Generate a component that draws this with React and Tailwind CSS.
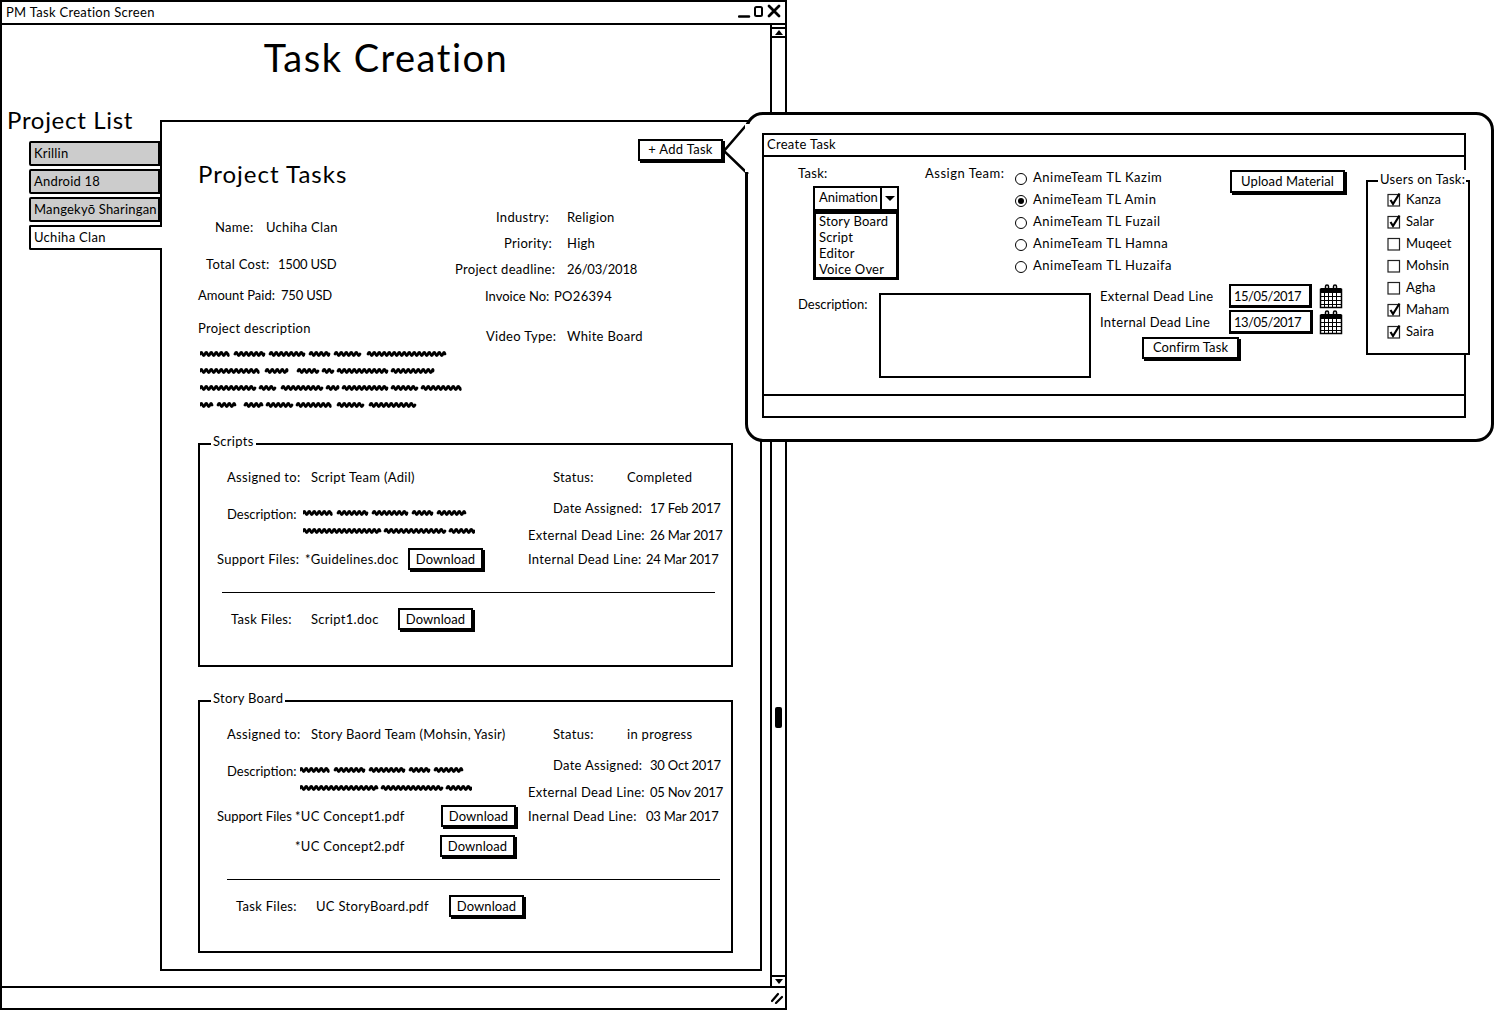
import React from 'react';

const btnClass = 'flex items-center justify-center border-2 border-black bg-white shadow-[2px_2px_0_#000] shrink-0 tracking-[0.1px]';
const dateText = 'tracking-[-0.2px]';

const Button = ({ className, children }) => (
    <div className={`${btnClass} ${className}`}>{children}</div>
);

// redacted text, words are [start, end] in px from the left of the line
const Squiggle = ({ words, width, className }) => {
    const paths = words.map(([a, b]) => {
        let d = `M${a} 9`;
        let up = true;
        for (let x = a; x < b; x += 2.5) {
            d += ` Q${x + 1.25} ${up ? 6 : 12} ${Math.min(x + 2.5, b)} 9`;
            up = !up;
        }
        return d;
    });
    return (
        <svg width={width} height="18" className={className}>
            {paths.map((d, i) => (
                <path key={i} d={d} fill="none" stroke="#000" strokeWidth="2.8" strokeLinecap="round" />
            ))}
        </svg>
    );
};

const Calendar = () => (
    <svg width="24" height="25" viewBox="0 0 24 25" className="shrink-0">
        <rect x="1.5" y="5.5" width="21" height="18" fill="#fff" stroke="#000" strokeWidth="1.5" />
        <rect x="1.5" y="4" width="21" height="5" fill="#000" />
        <path d="M1.5 12.5H22.5M1.5 16.5H22.5M1.5 20.5H22.5M5.5 9V24M9.5 9V24M13.5 9V24M17.5 9V24" stroke="#000" strokeWidth="1" />
        <path d="M6.5 6V2.5Q6.5 1 8 1T9.5 2.5V6M14.5 6V2.5Q14.5 1 16 1T17.5 2.5V6" fill="none" stroke="#000" strokeWidth="1.5" />
    </svg>
);

const Checkbox = ({ label, checked }) => (
    <div className="flex items-center h-[22px] gap-[5px]">
        <svg width="14" height="16" viewBox="0 0 14 16" className="shrink-0 -mt-[2px]">
            <rect x="1" y="3.5" width="11.5" height="11.5" fill="#fff" stroke="#222" strokeWidth="1.2" />
            {checked && <path d="M3.5 9L6 13L12.5 2.5" fill="none" stroke="#000" strokeWidth="2.2" />}
        </svg>
        <span className="tracking-[0.1px]">{label}</span>
    </div>
);

const Radio = ({ label, checked }) => (
    <div className="flex items-center h-[22px] gap-[6px]">
        <div className="flex items-center justify-center w-[12px] h-[12px] mt-[1px] rounded-full border border-black shrink-0">
            {checked && <div className="w-[6px] h-[6px] rounded-full bg-black" />}
        </div>
        <span className="tracking-[0.5px]">{label}</span>
    </div>
);

const Field = ({ label, value, labelClass = '', valueClass = '', className = '', children }) => (
    <div className={`flex items-center h-[18px] leading-[18px] whitespace-nowrap ${className}`}>
        <span className={`shrink-0 ${labelClass}`}>{label}</span>
        {value !== undefined && <span className={`shrink-0 ${valueClass}`}>{value}</span>}
        {children}
    </div>
);

const GroupBox = ({ title, className, children }) => (
    <div className={`relative border-2 border-black ml-[36px] w-[535px] ${className}`}>
        <div className="absolute -top-[13px] left-[11px] h-[18px] leading-[18px] px-[2px] bg-white">{title}</div>
        {children}
    </div>
);

const line1 = [[0, 28], [35, 64], [70, 104], [110, 129], [135, 160], [168, 245]];
const line2 = [[0, 58], [66, 87], [98, 118], [123, 133], [138, 187], [192, 233]];
const line3 = [[0, 55], [60, 75], [82, 122], [127, 138], [143, 187], [192, 217], [222, 260]];
const line4 = [[0, 12], [18, 35], [45, 62], [67, 92], [97, 130], [138, 163], [170, 215]];
const descA = [[0, 28], [35, 64], [70, 104], [110, 129], [135, 162]];
const descB = [[0, 77], [82, 142], [147, 171]];

const ProjectPanel = () => (
    <div className="w-[602px] h-[851px] mt-[29px] border-2 border-black pt-[17px] shrink-0 bg-white">
        <div className="flex justify-end pr-[37px]">
            <Button className="w-[85px] h-[22px] tracking-[0.3px]">+ Add Task</Button>
        </div>
        <h2 className="ml-[36px] h-[28px] leading-[26px] text-[24px] tracking-[1px]">Project Tasks</h2>

        <div className="flex ml-[36px]">
            <div className="w-[257px] shrink-0">
                <Field className="mt-[29px]" label="Name:" value="Uchiha Clan" labelClass="ml-[17px] w-[51px]" />
                <Field className="mt-[19px]" label="Total Cost:" value="1500 USD" labelClass="ml-[8px] w-[72px]" valueClass={dateText} />
                <Field className="mt-[13px]" label="Amount Paid:" value="750 USD" labelClass="w-[83px] tracking-[0px]" valueClass={dateText} />
                <Field className="mt-[15px]" label="Project description" />
                <div className="flex flex-col mt-[8px]">
                    <Squiggle words={line1} width="262" className="ml-[2px]" />
                    <Squiggle words={line2} width="262" className="-mt-[1px] ml-[2px]" />
                    <Squiggle words={line3} width="262" className="-mt-[1px] ml-[2px]" />
                    <Squiggle words={line4} width="262" className="-mt-[1px] ml-[2px]" />
                </div>
            </div>
            <div>
                <Field className="mt-[19px]" label="Industry:" value="Religion" labelClass="ml-[41px] w-[71px]" />
                <Field className="mt-[8px]" label="Priority:" value="High" labelClass="ml-[49px] w-[63px]" />
                <Field className="mt-[8px]" label="Project deadline:" value="26/03/2018" labelClass="w-[112px]" valueClass={dateText} />
                <Field className="mt-[9px]" label="Invoice No:" value="PO26394" labelClass="ml-[30px] w-[69px] tracking-[0px]" />
                <Field className="mt-[22px]" label="Video Type:" value="White Board" labelClass="ml-[31px] w-[81px]" />
            </div>
        </div>

        <GroupBox title="Scripts" className="mt-[29px] h-[224px]">
            <div className="flex pt-[23px]">
                <div className="w-[328px] shrink-0">
                    <Field label="Assigned to:" value="Script Team (Adil)" labelClass="ml-[27px] w-[84px]" />
                    <div className="flex mt-[19px]">
                        <Field label="Description:" labelClass="ml-[27px] w-[76px] tracking-[0px]" />
                        <div className="flex flex-col -mt-[1px]">
                            <Squiggle words={descA} width="172" />
                            <Squiggle words={descB} width="172" />
                        </div>
                    </div>
                    <Field className="mt-[10px]" label="Support Files:" value={<span className="inline-block w-[103px]">*Guidelines.doc</span>} labelClass="ml-[17px] w-[88px]">
                        <Button className="w-[75px] h-[22px]">Download</Button>
                    </Field>
                </div>
                <div>
                    <Field label="Status:" value="Completed" labelClass="ml-[25px] w-[74px]" />
                    <Field className="mt-[13px]" label="Date Assigned:" value="17 Feb 2017" labelClass="ml-[25px] w-[97px]" valueClass={dateText} />
                    <Field className="mt-[9px]" label="External Dead Line:" value="26 Mar 2017" labelClass="w-[122px]" valueClass={dateText} />
                    <Field className="mt-[6px]" label="Internal Dead Line:" value="24 Mar 2017" labelClass="w-[118px]" valueClass={dateText} />
                </div>
            </div>
            <div className="h-[1px] bg-black mt-[24px] ml-[22px] w-[493px]" />
            <Field className="mt-[17px]" label="Task Files:" value={<span className="inline-block w-[87px]">Script1.doc</span>} labelClass="ml-[31px] w-[80px]">
                <Button className="w-[75px] h-[22px]">Download</Button>
            </Field>
        </GroupBox>

        <GroupBox title="Story Board" className="mt-[33px] h-[253px]">
            <div className="flex pt-[23px]">
                <div className="w-[328px] shrink-0">
                    <Field label="Assigned to:" value="Story Baord Team (Mohsin, Yasir)" labelClass="ml-[27px] w-[84px]" />
                    <div className="flex mt-[19px]">
                        <Field label="Description:" labelClass="ml-[27px] w-[73px] tracking-[0px]" />
                        <div className="flex flex-col -mt-[1px]">
                            <Squiggle words={descA} width="172" />
                            <Squiggle words={descB} width="172" />
                        </div>
                    </div>
                    <Field className="mt-[10px]" label="Support Files" value={<span className="inline-block w-[146px]">*UC Concept1.pdf</span>} labelClass="ml-[17px] w-[78px] tracking-[0px]">
                        <Button className="w-[75px] h-[22px]">Download</Button>
                    </Field>
                    <Field className="mt-[12px]" label="" value={<span className="inline-block w-[145px]">*UC Concept2.pdf</span>} labelClass="ml-[95px]">
                        <Button className="w-[75px] h-[22px]">Download</Button>
                    </Field>
                </div>
                <div>
                    <Field label="Status:" value="in progress" labelClass="ml-[25px] w-[74px]" />
                    <Field className="mt-[13px]" label="Date Assigned:" value="30 Oct 2017" labelClass="ml-[25px] w-[97px]" valueClass={dateText} />
                    <Field className="mt-[9px]" label="External Dead Line:" value="05 Nov 2017" labelClass="w-[122px]" valueClass={dateText} />
                    <Field className="mt-[6px]" label="Inernal Dead Line:" value="03 Mar 2017" labelClass="w-[118px]" valueClass={dateText} />
                </div>
            </div>
            <div className="h-[1px] bg-black mt-[24px] ml-[27px] w-[493px]" />
            <Field className="mt-[17px]" label="Task Files:" value={<span className="inline-block w-[133px]">UC StoryBoard.pdf</span>} labelClass="ml-[36px] w-[80px]">
                <Button className="w-[75px] h-[22px]">Download</Button>
            </Field>
        </GroupBox>
    </div>
);

const tabs = ['Krillin', 'Android 18', 'Mangekyō Sharingan'];

const TaskWindow = () => (
    <div className="flex flex-col w-[787px] h-[1010px] border-2 border-black bg-white">
        <div className="flex items-center justify-between h-[23px] border-b-2 border-black pl-[4px] pr-[3px] shrink-0">
            <span>PM Task Creation Screen</span>
            <svg width="44" height="14" viewBox="0 0 44 14" className="-mt-[3px]">
                <path d="M1 12.5H11" stroke="#000" strokeWidth="2.5" strokeLinecap="round" />
                <rect x="17" y="3" width="7" height="9" rx="1.5" fill="none" stroke="#000" strokeWidth="2" />
                <path d="M31 2L41 12M41 2L31 12" stroke="#000" strokeWidth="2.8" strokeLinecap="round" />
            </svg>
        </div>
        <div className="flex flex-1 min-h-0">
            <div className="flex-1 min-w-0">
                <h1 className="h-[66px] leading-[64px] text-center text-[38px] tracking-[1.5px]">Task Creation</h1>
                <div className="flex">
                    <div className="w-[158px] shrink-0">
                        <div className="mt-[14px] ml-[5px] h-[30px] leading-[30px] text-[24px] tracking-[0.7px] whitespace-nowrap">Project List</div>
                        <div className="flex flex-col gap-[3px] mt-[6px] ml-[27px]">
                            {tabs.map((t) => (
                                <div key={t} className="w-[131px] h-[25px] leading-[21px] pl-[3px] border-2 border-black bg-[#cccccc] rounded-l-[2px] whitespace-nowrap tracking-[0.2px]">{t}</div>
                            ))}
                            <div className="relative z-10 w-[133px] h-[25px] leading-[21px] pl-[3px] border-2 border-r-0 border-black bg-white rounded-l-[2px]">Uchiha Clan</div>
                        </div>
                    </div>
                    <ProjectPanel />
                </div>
            </div>
            <div className="flex flex-col w-[15px] border-l-2 border-black shrink-0">
                <div className="flex items-center justify-center h-[11px] mt-[2px] border-y-2 border-black">
                    <div className="w-0 h-0 border-x-[4px] border-x-transparent border-b-[5px] border-b-black" />
                </div>
                <div className="w-[7px] h-[21px] mt-[669px] mx-auto bg-black rounded-[2px]" />
                <div className="flex items-center justify-center h-[11px] mt-auto border-t-2 border-black">
                    <div className="w-0 h-0 border-x-[4px] border-x-transparent border-t-[5px] border-t-black" />
                </div>
            </div>
        </div>
        <div className="flex items-center justify-end h-[22px] border-t-2 border-black pr-[2px] shrink-0">
            <svg width="12" height="12" viewBox="0 0 12 12">
                <path d="M1 9L7 2M5 11L11 5" stroke="#000" strokeWidth="2.2" strokeLinecap="round" />
            </svg>
        </div>
    </div>
);

const CreateTaskPopup = () => (
    <div className="absolute left-[745px] top-[112px] z-20 w-[749px] h-[330px] border-[3px] border-black rounded-[18px] bg-white">
        <svg width="30" height="60" viewBox="0 0 30 60" className="absolute -left-[25px] top-[3px] overflow-visible">
            <path d="M26 4L1 33L25 56" fill="#fff" stroke="#000" strokeWidth="2.5" />
            <rect x="22" y="6" width="6" height="48" fill="#fff" />
        </svg>
        <div className="flex flex-col w-[704px] h-[285px] mt-[18px] ml-[14px] border-2 border-black">
            <div className="h-[22px] leading-[18px] pl-[3px] border-b-2 border-black shrink-0">Create Task</div>
            <div className="flex flex-1 pl-[34px] min-h-0">
                <div className="w-[568px] shrink-0">
                    <div className="flex pt-[7px]">
                        <div className="w-[127px] shrink-0">
                            <Field label="Task:" />
                            <div className="flex w-[86px] h-[25px] mt-[4px] ml-[15px] border-2 border-black">
                                <div className="w-[67px] leading-[18px] pl-[4px] border-r-2 border-black tracking-[0px]">Animation</div>
                                <div className="flex flex-1 items-center justify-center">
                                    <div className="w-0 h-0 border-x-[5px] border-x-transparent border-t-[5px] border-t-black" />
                                </div>
                            </div>
                            <div className="w-[86px] h-[69px] ml-[15px] pl-[3px] border-[3px] border-black tracking-[0.2px]">
                                <div className="-mt-[1px] leading-[16px]">
                                    <div>Story Board</div>
                                    <div>Script</div>
                                    <div>Editor</div>
                                    <div>Voice Over</div>
                                </div>
                            </div>
                        </div>
                        <div className="w-[90px] shrink-0">
                            <Field label="Assign Team:" labelClass="tracking-[0.5px]" />
                        </div>
                        <div className="w-[215px] shrink-0 mt-[3px]">
                            <Radio label="AnimeTeam TL Kazim" />
                            <Radio label="AnimeTeam TL Amin" checked />
                            <Radio label="AnimeTeam TL Fuzail" />
                            <Radio label="AnimeTeam TL Hamna" />
                            <Radio label="AnimeTeam TL Huzaifa" />
                        </div>
                        <Button className="w-[115px] h-[23px] mt-[6px]">Upload Material</Button>
                    </div>
                    <div className="flex mt-[4px]">
                        <Field className="w-[81px] mt-[11px]" label="Description:" labelClass="tracking-[0px]" />
                        <div className="w-[212px] h-[85px] mt-[9px] border-2 border-black shrink-0" />
                        <div className="ml-[9px]">
                            <div className="flex">
                                <Field className="w-[129px] h-[24px]" label="External Dead Line" />
                                <div className="w-[83px] h-[24px] leading-[20px] pl-[3px] border-2 border-r-[3px] border-b-[3px] border-black shrink-0 tracking-[-0.5px]">15/05/2017</div>
                                <div className="ml-[7px]"><Calendar /></div>
                            </div>
                            <div className="flex mt-[1px]">
                                <Field className="w-[129px] h-[24px]" label="Internal Dead Line" />
                                <div className="w-[84px] h-[24px] leading-[20px] pl-[3px] border-2 border-r-[3px] border-b-[3px] border-black shrink-0 tracking-[-0.5px]">13/05/2017</div>
                                <div className="ml-[6px]"><Calendar /></div>
                            </div>
                            <Button className="w-[97px] h-[22px] mt-[2px] ml-[42px]">Confirm Task</Button>
                        </div>
                    </div>
                </div>
                <div className="relative z-10 w-[104px] h-[175px] mt-[23px] pt-[7px] pl-[19px] border-2 border-black shrink-0 bg-white">
                    <div className="absolute -top-[12px] left-[10px] h-[18px] leading-[18px] pl-[2px] pr-[1px] bg-white whitespace-nowrap">Users on Task:</div>
                    <Checkbox label="Kanza" checked />
                    <Checkbox label="Salar" checked />
                    <Checkbox label="Muqeet" />
                    <Checkbox label="Mohsin" />
                    <Checkbox label="Agha" />
                    <Checkbox label="Maham" checked />
                    <Checkbox label="Saira" checked />
                </div>
            </div>
            <div className="h-[22px] border-t-2 border-black shrink-0" />
        </div>
    </div>
);

const App = () => {
    return (
        <div className="relative w-[1495px] h-[1011px] bg-white text-black text-[13px] tracking-[0.3px] font-['Lato','Liberation_Sans',sans-serif]">
            <TaskWindow />
            <CreateTaskPopup />
        </div>
    );
};

export default App;
